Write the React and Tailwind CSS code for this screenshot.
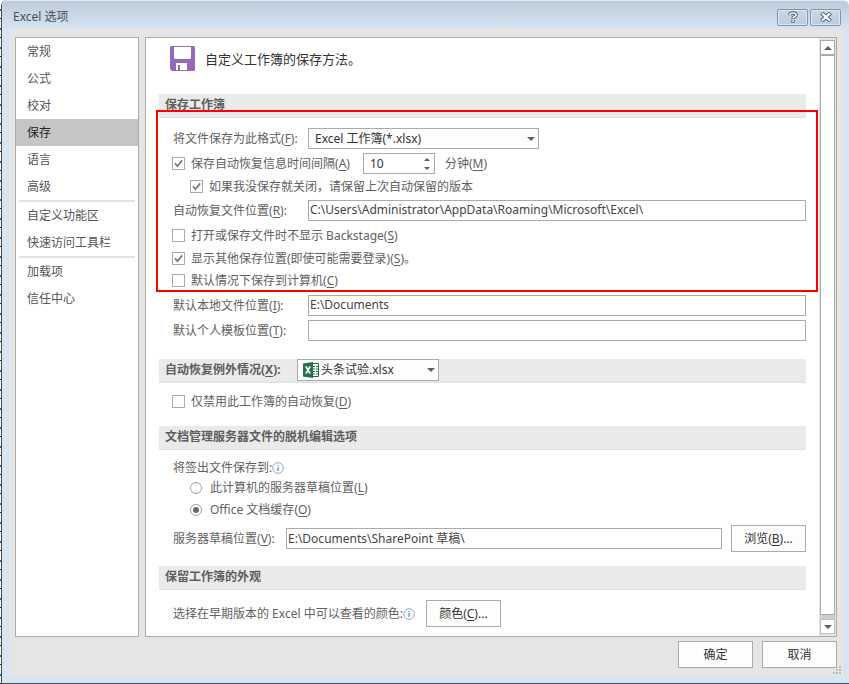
import React, { useState } from 'react';

const sidebarGroups = [
  ['常规', '公式', '校对', '保存', '语言', '高级'],
  ['自定义功能区', '快速访问工具栏'],
  ['加载项', '信任中心'],
];

const Key = ({ children }) => (
  <>
    (<span className="underline underline-offset-2">{children}</span>)
  </>
);

const SectionHeader = ({ children }) => (
  <div className="flex h-6 items-center border-b border-[#e0e0e0] bg-[#eaeaea] pb-0.5 pl-1.5 font-bold text-[#5e5e5e]">
    {children}
  </div>
);

const Checkbox = ({ id, defaultChecked, children }) => (
  <label htmlFor={id} className="flex items-center gap-1.5">
    <span className="grid size-[13px] shrink-0">
      <input
        id={id}
        type="checkbox"
        defaultChecked={defaultChecked}
        className="peer col-start-1 row-start-1 size-[13px] appearance-none border border-[#ababab] bg-white"
      />
      <svg
        viewBox="0 0 13 13"
        className="pointer-events-none invisible col-start-1 row-start-1 size-[13px] peer-checked:visible"
      >
        <path d="M3 6.2 L5.4 9.2 L10.2 3.4" fill="none" stroke="#747474" strokeWidth="1.7" />
      </svg>
    </span>
    <span>{children}</span>
  </label>
);

const Radio = ({ id, checked, onChange, children }) => (
  <label htmlFor={id} className="flex items-center gap-2">
    <span className="grid size-3 shrink-0 place-items-center">
      <input
        id={id}
        type="radio"
        name="checkout"
        checked={checked}
        onChange={onChange}
        className="peer col-start-1 row-start-1 size-3 appearance-none rounded-full border border-[#a0a0a0] bg-white"
      />
      <span className="pointer-events-none invisible col-start-1 row-start-1 size-1.5 rounded-full bg-[#6a6a6a] peer-checked:visible" />
    </span>
    <span>{children}</span>
  </label>
);

const TextField = ({ id, defaultValue }) => (
  <input
    id={id}
    type="text"
    defaultValue={defaultValue}
    className="h-[21px] min-w-0 flex-1 border border-[#ababab] bg-white px-px pb-0.5 text-[#444]"
  />
);

const PushButton = ({ children }) => (
  <button type="button" className="h-[27px] w-[75px] shrink-0 border border-[#ababab] bg-[#fdfdfd] text-[#333]">
    {children}
  </button>
);

const Arrow = ({ up, className }) => (
  <svg viewBox="0 0 8 4" className={className}>
    <path d={up ? 'M0 4 L4 0 L8 4 Z' : 'M0 0 L8 0 L4 4 Z'} fill="#606060" />
  </svg>
);

const InfoIcon = () => (
  <svg viewBox="0 0 12 12" className="size-3 shrink-0">
    <circle cx="6" cy="6" r="5.3" fill="#fff" stroke="#85a8da" />
    <path d="M6 5 V9 M6 3 V4" stroke="#5b87c8" strokeWidth="1.2" />
  </svg>
);

const SaveIcon = () => (
  <svg viewBox="0 0 25 25" className="size-[25px]">
    <path d="M1 0 H24 L25 1 V24 L24 25 H2 L0 23 V1 Z" fill="#9668b8" />
    <path d="M4 1 H21 V12 L20 13 H5 L4 12 Z" fill="#fff" />
    <path d="M6 17 H17 V24 H10 V19 H8 V24 H6 Z" fill="#fff" />
  </svg>
);

const ExcelIcon = () => (
  <svg viewBox="0 0 16 16" className="size-4">
    <path d="M9 1.5 H15.5 V14.5 H9 Z" fill="#fff" stroke="#217346" />
    <path d="M10 4.5 H12 M10 7 H12 M10 9.5 H12 M10 12 H12 M13 4.5 H15 M13 7 H15 M13 9.5 H15 M13 12 H15" stroke="#217346" />
    <path d="M0 1.5 L10 0 V16 L0 14.5 Z" fill="#217346" />
    <path d="M2.8 4.4 L7.2 11.6 M7.2 4.4 L2.8 11.6" stroke="#fff" strokeWidth="1.8" />
  </svg>
);

const CaptionButton = ({ label, children }) => (
  <button
    type="button"
    aria-label={label}
    className="flex h-[17px] w-[31px] items-center justify-center rounded-xs border border-[#8496ae] bg-linear-to-b from-[#c9d7e6] to-[#bccde0] shadow-[inset_0_0_0_1px_#dbe6f1]"
  >
    {children}
  </button>
);

const App = () => {
  const [page, setPage] = useState('保存');
  const [checkout, setCheckout] = useState('cache');

  return (
    <div className="flex min-h-screen bg-[repeating-linear-gradient(#fff_0_9px,#1c5fa8_9px_11px,#fff_11px_18px,#222_18px_19px)] pl-px font-['Noto_Sans','Noto_Sans_CJK_SC',sans-serif] text-[12px] leading-4 text-[#606060]">
      <div className="flex flex-1 flex-col rounded-t-md border-b border-l border-[#4a4f57] bg-[#d7e4f2] pr-1.5 pb-[7px] pl-[7px]">
        {/* Title bar */}
        <header className="-mr-1.5 -ml-[7px] flex h-[29px] items-center justify-between rounded-t-md border-t border-[#e3eaf1] bg-linear-to-b from-[#bccbda] to-[#d7e4f2] pt-1.5 pr-2 pb-0.5 pl-[11px]">
          <h1 className="text-[#4a4f57]">Excel 选项</h1>
          <div className="flex gap-0.5">
            <CaptionButton label="帮助">
              <svg viewBox="0 0 10 12" className="h-3 w-2.5">
                <path d="M2 4.2 V3.6 Q2 2 5 2 Q8 2 8 3.8 Q8 5 6.5 5.8 Q5 6.4 5 8 M5 9.2 V11.6" fill="none" stroke="#4a5568" strokeWidth="3.4" />
                <path d="M2 4.2 V3.6 Q2 2 5 2 Q8 2 8 3.8 Q8 5 6.5 5.8 Q5 6.4 5 7.6 M5 9.2 V10.8" fill="none" stroke="#fff" strokeWidth="1.6" />
              </svg>
            </CaptionButton>
            <CaptionButton label="关闭">
              <svg viewBox="0 0 12 10" className="h-2.5 w-3">
                <path d="M1.5 1 L10.5 9 M10.5 1 L1.5 9" stroke="#4a5568" strokeWidth="4" />
                <path d="M2 1.4 L10 8.6 M10 1.4 L2 8.6" stroke="#fff" strokeWidth="2.1" />
              </svg>
            </CaptionButton>
          </div>
        </header>

        <div className="flex flex-1 flex-col bg-[#e5e5e5] px-1.5 pt-2">
          <div className="flex flex-1 gap-1.5">
            {/* Sidebar */}
            <nav className="w-[124px] shrink-0 border border-[#ababab] bg-white">
              {sidebarGroups.map((group, i) => (
                <div key={group[0]}>
                  {i > 0 && <hr className="mx-[3px] border-t-2 border-[#e3e3e3]" />}
                  {group.map((item) => (
                    <button
                      key={item}
                      type="button"
                      onClick={() => setPage(item)}
                      className={`block h-[27px] w-full pl-[11px] text-left ${
                        page === item ? 'bg-[#c5c5c5] text-[#262626]' : 'text-[#555]'
                      }`}
                    >
                      {item}
                    </button>
                  ))}
                </div>
              ))}
            </nav>

            {/* Options */}
            <main className="flex min-w-0 flex-1 border border-[#ababab] bg-white">
              <div className="min-w-0 flex-1 px-[13px] pb-[9px]">
                <div className="mb-3.5 flex h-10 items-center gap-2.5 pt-px pl-[11px]">
                  <SaveIcon />
                  <h2 className="text-[13px] text-[#333]">自定义工作簿的保存方法。</h2>
                </div>

                <section className="mt-4">
                  <SectionHeader>保存工作簿</SectionHeader>
                  <div className="relative pt-2 pl-3.5">
                    <div className="flex h-[25px] items-center">
                      <label htmlFor="format" className="w-[135px] shrink-0">将文件保存为此格式<Key>F</Key>:</label>
                      <span className="grid w-[231px] items-center">
                        <select id="format" className="col-start-1 row-start-1 h-[21px] appearance-none border border-[#ababab] bg-[#fdfdfd] pl-1.5 text-[#333]">
                          <option>Excel 工作簿(*.xlsx)</option>
                        </select>
                        <Arrow className="pointer-events-none col-start-1 row-start-1 mr-1 h-1 w-2 justify-self-end" />
                      </span>
                    </div>
                    <div className="-ml-px flex h-[25px] items-center">
                      <Checkbox id="auto" defaultChecked>保存自动恢复信息时间间隔<Key>A</Key></Checkbox>
                      <span className="mr-2.5 ml-[13px] flex h-[21px] w-[72px] items-center border border-[#ababab] bg-white pr-1">
                        <input id="minutes" type="text" defaultValue="10" className="min-w-0 flex-1 pl-1.5 text-[#333]" />
                        <span className="flex flex-col gap-1.5">
                          <button type="button" aria-label="增加"><Arrow up className="block h-[3px] w-1.5" /></button>
                          <button type="button" aria-label="减少"><Arrow className="block h-[3px] w-1.5" /></button>
                        </span>
                      </span>
                      <label htmlFor="minutes">分钟<Key>M</Key></label>
                    </div>
                    <div className="-ml-px flex h-[21px] items-center pl-[18px]">
                      <Checkbox id="keep" defaultChecked>如果我没保存就关闭，请保留上次自动保留的版本</Checkbox>
                    </div>
                    <div className="flex h-[27px] items-center">
                      <label htmlFor="recover" className="w-[135px] shrink-0">自动恢复文件位置<Key>R</Key>:</label>
                      <TextField id="recover" defaultValue={'C:\\Users\\Administrator\\AppData\\Roaming\\Microsoft\\Excel\\'} />
                    </div>
                    <div className="-ml-px pb-0.5">
                      <div className="flex h-[23px] items-center">
                        <Checkbox id="backstage">打开或保存文件时不显示 Backstage<Key>S</Key></Checkbox>
                      </div>
                      <div className="flex h-[23px] items-center">
                        <Checkbox id="places" defaultChecked>显示其他保存位置(即使可能需要登录)<Key>S</Key>。</Checkbox>
                      </div>
                      <div className="flex h-[21px] items-center">
                        <Checkbox id="computer">默认情况下保存到计算机<Key>C</Key></Checkbox>
                      </div>
                    </div>
                    {/* Highlight frame */}
                    <div className="pointer-events-none absolute -top-2 -right-3 bottom-px -left-[3px] border-2 border-[#fe0000]" />
                  </div>
                  <div className="pl-3.5">
                    <div className="flex h-[25px] items-center">
                      <label htmlFor="local" className="w-[135px] shrink-0">默认本地文件位置<Key>I</Key>:</label>
                      <TextField id="local" defaultValue={'E:\\Documents'} />
                    </div>
                    <div className="flex h-[25px] items-center">
                      <label htmlFor="template" className="w-[135px] shrink-0">默认个人模板位置<Key>T</Key>:</label>
                      <TextField id="template" />
                    </div>
                  </div>
                </section>

                <section className="mt-4">
                  <SectionHeader>
                    <label htmlFor="workbook" className="w-[132px]">自动恢复例外情况<Key>X</Key>:</label>
                    <span className="grid w-[142px] items-center font-normal">
                      <select id="workbook" className="col-start-1 row-start-1 h-[22px] appearance-none border border-[#ababab] bg-[#fdfdfd] pl-[23px] text-[#333]">
                        <option>头条试验.xlsx</option>
                      </select>
                      <span className="pointer-events-none col-start-1 row-start-1 flex items-center justify-between pr-1 pl-1.5">
                        <ExcelIcon />
                        <Arrow className="h-1 w-2" />
                      </span>
                    </span>
                  </SectionHeader>
                  <div className="pt-2 pl-[13px]">
                    <div className="flex h-[21px] items-center">
                      <Checkbox id="disable">仅禁用此工作簿的自动恢复<Key>D</Key></Checkbox>
                    </div>
                  </div>
                </section>

                <section className="mt-3.5">
                  <SectionHeader>文档管理服务器文件的脱机编辑选项</SectionHeader>
                  <div className="pt-2 pl-3.5">
                    <div className="flex h-5 items-center">将签出文件保存到:<InfoIcon /></div>
                    <div className="-ml-px flex h-5 items-center pl-[18px]">
                      <Radio id="drafts" checked={checkout === 'drafts'} onChange={() => setCheckout('drafts')}>
                        此计算机的服务器草稿位置<Key>L</Key>
                      </Radio>
                    </div>
                    <div className="-ml-px flex h-6 items-center pl-[18px]">
                      <Radio id="cache" checked={checkout === 'cache'} onChange={() => setCheckout('cache')}>
                        Office 文档缓存<Key>O</Key>
                      </Radio>
                    </div>
                    <div className="flex h-[33px] items-center">
                      <label htmlFor="server" className="w-[113px] shrink-0">服务器草稿位置<Key>V</Key>:</label>
                      <TextField id="server" defaultValue={'E:\\Documents\\SharePoint 草稿\\'} />
                      <span className="ml-[9px] flex">
                        <PushButton>浏览<Key>B</Key>...</PushButton>
                      </span>
                    </div>
                  </div>
                </section>

                <section className="mt-[11px]">
                  <SectionHeader>保留工作簿的外观</SectionHeader>
                  <div className="flex items-center pt-2.5 pl-3.5">
                    选择在早期版本的 Excel 中可以查看的颜色:<InfoIcon />
                    <span className="ml-[11px] flex">
                      <PushButton>颜色<Key>C</Key>...</PushButton>
                    </span>
                  </div>
                </section>
              </div>

              {/* Scrollbar */}
              <div className="flex w-[17px] shrink-0 flex-col bg-[#e5e5e5] px-px py-0.5">
                <button type="button" aria-label="向上滚动" className="flex h-[15px] items-center justify-center border border-[#ababab] bg-white">
                  <Arrow up className="h-1 w-2" />
                </button>
                <div className="flex-1 border border-[#ababab] bg-white" />
                <div className="h-1 bg-[#cdcdcd]" />
                <button type="button" aria-label="向下滚动" className="flex h-[15px] items-center justify-center border border-[#c0c0c0] bg-white">
                  <Arrow className="h-1 w-2" />
                </button>
              </div>
            </main>
          </div>

          {/* Footer */}
          <footer className="relative flex justify-end gap-[9px] pt-1 pb-2">
            <PushButton>确定</PushButton>
            <PushButton>取消</PushButton>
            <svg viewBox="0 0 8 8" className="absolute -right-1 bottom-0.5 size-2">
              <path d="M6 0h2v2h-2z M3 3h2v2h-2z M6 3h2v2h-2z M0 6h2v2h-2z M3 6h2v2h-2z M6 6h2v2h-2z" fill="#bcbcbc" />
            </svg>
          </footer>
        </div>
      </div>
    </div>
  );
};

export default App;
